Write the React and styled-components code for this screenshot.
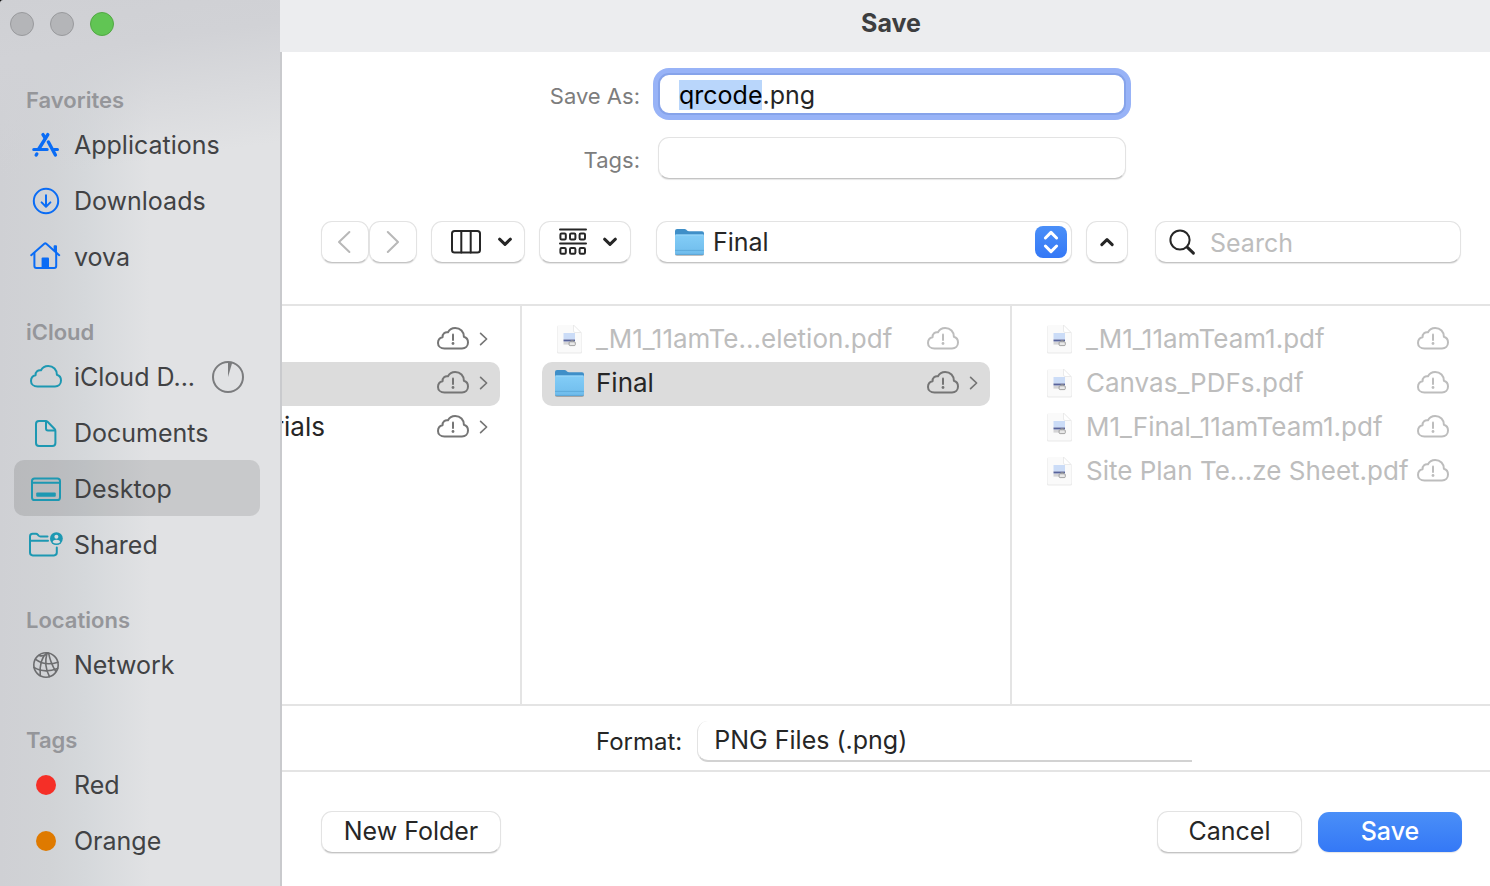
import React, { useEffect, useRef } from 'react';
import styled, { createGlobalStyle, css } from 'styled-components';

const GlobalStyle = createGlobalStyle`
  *, *::before, *::after { box-sizing: border-box; }
  body {
    margin: 0;
    background: #000;
    color: #262626;
    font-family: Inter, "Liberation Sans", sans-serif;
    font-size: 25px;
    line-height: 32px;
  }
  button, input, select { font: inherit; color: inherit; margin: 0; }
  ul { list-style: none; margin: 0; padding: 0; }
  svg { display: block; flex: none; }
`;

const Window = styled.div`
  display: flex;
  min-height: 100vh;
  overflow: hidden;
`;

/* ---------- sidebar ---------- */

const Sidebar = styled.nav`
  flex: none;
  width: 280px;
  border-top-left-radius: 3px;
  background:
    linear-gradient(172deg, #cfd0d4 0, #d1d2d6 60px, rgba(212, 215, 218, 0) 180px),
    linear-gradient(90deg, #cfd0d4 0, #d1d3d6 50px, #d5d8db 85px, #e1e2e4 150px, #e1e2e4 100%);
`;

const TrafficLights = styled.div`
  display: flex;
  gap: 16px;
  height: 52px;
  padding: 12px 10px;
`;

const Light = styled.button`
  width: 24px;
  height: 24px;
  padding: 0;
  border: 1px solid ${(p) => (p.$on ? '#52a844' : '#999a9d')};
  border-radius: 50%;
  background: ${(p) => (p.$on ? '#61c554' : '#b4b5b8')};
`;

const GroupTitle = styled.h2`
  margin: 0;
  padding: 32px 26px 0;
  font-size: 22px;
  font-weight: 600;
  color: #95969a;
`;

const Place = styled.a`
  display: flex;
  align-items: center;
  gap: 12px;
  height: 56px;
  margin: 0 20px 0 14px;
  padding: 2px 16px 0;
  border-radius: 10px;
  color: #414244;
  text-decoration: none;
  background: ${(p) => (p.$active ? 'rgba(0, 0, 0, 0.11)' : 'transparent')};
  & > svg:first-child { color: ${(p) => p.$tint}; }
  & > svg:last-child { color: #7b7c7e; }
`;

const PlaceName = styled.span`
  flex: 1;
  white-space: nowrap;
`;

const TagDot = styled.span`
  width: 20px;
  height: 20px;
  margin: 0 6px;
  border-radius: 50%;
  background: ${(p) => p.$color};
`;

/* ---------- dialog ---------- */

const Main = styled.main`
  flex: 1;
  min-width: 0;
  display: flex;
  flex-direction: column;
`;

const TitleBar = styled.header`
  height: 52px;
  padding: 7px 0 0 12px;
  background: #ecedef;
  text-align: center;
`;

const Title = styled.h1`
  margin: 0;
  font-size: 25px;
  line-height: 32px;
  font-weight: 700;
  color: #3d3e40;
`;

const Body = styled.form`
  flex: 1;
  display: flex;
  flex-direction: column;
  border-left: 2px solid #c9cacd;
  background: #fff;
`;

const Fields = styled.div`
  display: grid;
  grid-template-columns: 1fr 468px 1fr;
  gap: 22px 18px;
  padding: 21px 0 0 12px;
`;

const FieldLabel = styled.label`
  grid-column: 1;
  justify-self: end;
  align-self: center;
  padding-top: 4px;
  font-size: 22px;
  color: #7d7d7d;
`;

const raised = css`
  border: 1px solid #e3e3e3;
  border-bottom-color: #c4c4c4;
  border-radius: 11px;
  background: #fff;
  box-shadow: 0 1px 1px rgba(0, 0, 0, 0.1);
`;

const TextField = styled.input`
  ${raised}
  width: 100%;
  height: 42px;
  padding: 2px 20px 0;
  outline: none;
  &:focus {
    padding: 2px 19px 0;
    border: 2px solid #86a3ea;
    box-shadow: 0 0 0 5px #98b3f7;
  }
  &::selection { background: #b9d6fb; color: #000; }
`;

const Toolbar = styled.div`
  display: flex;
  gap: 14px;
  padding: 42px 29px 41px 39px;
`;

const ButtonPair = styled.div`
  display: flex;
`;

const ToolButton = styled.button`
  ${raised}
  display: flex;
  align-items: center;
  justify-content: center;
  gap: ${(p) => (p.$menu ? 15 : 0)}px;
  width: ${(p) => p.$width}px;
  height: 42px;
  padding: 0 ${(p) => (p.disabled ? 2 : 0)}px 0 ${(p) => (p.$menu ? 6 : 0)}px;
  color: ${(p) => (p.disabled ? '#b8b8b8' : '#262626')};
`;

const FolderPicker = styled.div`
  ${raised}
  flex: 1;
  display: flex;
  align-items: center;
  gap: 8px;
  height: 42px;
  margin-left: 11px;
  padding: 0 4px 0 17px;
`;

const PlainSelect = styled.select`
  flex: 1;
  min-width: 0;
  height: 32px;
  padding: 0 0 2px;
  border: 0;
  outline: none;
  background: transparent;
  appearance: none;
`;

const Stepper = styled.span`
  display: grid;
  place-items: center;
  width: 32px;
  height: 32px;
  border-radius: 8px;
  background: linear-gradient(#4a8ff8, #3478f6);
  color: #fff;
`;

const SearchBox = styled.label`
  ${raised}
  display: flex;
  align-items: center;
  gap: 14px;
  width: 306px;
  height: 42px;
  margin-left: 13px;
  padding: 0 12px;
`;

const SearchInput = styled.input`
  flex: 1;
  min-width: 0;
  padding: 2px 0 0;
  border: 0;
  outline: none;
  background: transparent;
  &::placeholder { color: #bdbdbd; opacity: 1; }
`;

/* ---------- column browser ---------- */

const Browser = styled.div`
  flex: 1;
  display: grid;
  grid-template-columns: 240px 490px 1fr;
  border-top: 2px solid #e4e4e4;
  border-bottom: 2px solid #e4e4e4;
`;

const Column = styled.ul`
  min-width: 0;
  padding: ${(p) => p.$padding};
  overflow: hidden;
  font-size: 26px;
  &:not(:last-child) { border-right: 2px solid #e4e4e4; }
`;

const Entry = styled.li`
  display: flex;
  align-items: center;
  gap: 10px;
  height: 44px;
  padding: 0 12px 2px ${(p) => (p.$flush ? 0 : 12)}px;
  border-radius: ${(p) => (p.$flush ? '0 10px 10px 0' : '10px')};
  background: ${(p) => (p.$selected ? '#dcdcdc' : 'transparent')};
  color: ${(p) => (p.$dim ? '#bdbdbd' : '#262626')};
  & > svg:not(:first-child) { color: ${(p) => (p.$dim ? '#bdbdbd' : '#757575')}; }
`;

const EntryName = styled.span`
  flex: 1;
  min-width: 0;
  padding-left: 1px;
  white-space: nowrap;
`;

const ScrolledName = styled.span`
  display: flex;
  justify-content: flex-end;
  width: 43px;
  margin-right: auto;
  overflow: hidden;
`;

const ChevronSlot = styled.span`
  width: 9px;
`;

/* ---------- bottom ---------- */

const FormatRow = styled.div`
  display: flex;
  align-items: center;
  gap: 15px;
  height: 66px;
  padding: 6px 0 0 314px;
  border-bottom: 2px solid #e4e4e4;
`;

const FormatLabel = styled.label`
  padding-top: 2px;
  font-size: 24px;
`;

const FormatSelect = styled(PlainSelect)`
  flex: 0 1 495px;
  height: 41px;
  padding: 0 16px;
  border-left: 1px solid #e3e3e3;
  border-bottom: 2px solid #d2d2d2;
  border-radius: 11px 0 0 11px;
`;

const Footer = styled.footer`
  display: flex;
  align-items: center;
  gap: 16px;
  padding: 39px 28px 33px 39px;
`;

const PushButton = styled.button`
  ${raised}
  width: ${(p) => p.$width}px;
  height: 42px;
  padding: 0 0 2px;
  &:first-child { margin-right: auto; }
  ${(p) => p.$primary && css`
    height: 40px;
    border: 0;
    color: #fff;
    font-weight: 500;
    background: linear-gradient(#4a8ff8, #3478f6);
  `}
`;

/* ---------- icons ---------- */

const Icon = ({ w = 32, h = 32, sw = 2, children }) => (
  <svg width={w} height={h} viewBox={`0 0 ${w} ${h}`} fill="none" stroke="currentColor"
    strokeWidth={sw} strokeLinecap="round" strokeLinejoin="round" aria-hidden="true">
    {children}
  </svg>
);

const cloudPath =
  'M7.5 21.5C3.6 21.5 1 19 1 15.9C1 12.8 3.1 10.7 5.6 10.2C5.3 7 8 4.7 11 5.3C12.3 2.7 15 1 18.2 1C23.3 1 27 4.9 26.9 9.8C29.4 10.5 31 12.7 31 15.6C31 19 28.5 21.5 25 21.5Z';

const Cloud = () => <Icon h={24}><path d={cloudPath} /></Icon>;

const CloudAlert = () => (
  <Icon h={24} sw={2}>
    <path d={cloudPath} />
    <path d="M16 7.5V13" />
    <circle cx="16" cy="16.5" r="1.4" fill="currentColor" stroke="none" />
  </Icon>
);

const AppsIcon = () => (
  <Icon sw={3}>
    <path d="M17.8 5.6L8.8 20" strokeWidth="3.4" />
    <path d="M13 5.6L15.2 9" strokeWidth="3.4" />
    <path d="M18.4 13L25.4 26" strokeWidth="3.4" />
    <path d="M3.7 20.6H17.2M24 20.6H27.5" />
    <path d="M6.8 25L6.2 26" strokeWidth="3.4" />
  </Icon>
);

const DownloadsIcon = () => (
  <Icon>
    <circle cx="16" cy="16" r="12.2" />
    <path d="M16 10.2V21.4M11.6 17.4L16 21.8L20.4 17.4" />
  </Icon>
);

const HomeIcon = () => (
  <Icon>
    <path d="M1.2 14.2L14.3 2.8Q15.3 2 16.3 2.8L29.2 14.2" />
    <path d="M24.6 9.5V5.3H26V11" />
    <path d="M4.4 12V25Q4.4 27 6.4 27H24.2Q26.2 27 26.2 25V12" />
    <path d="M11.6 27V17.4Q11.6 16.4 12.6 16.4H18Q19 16.4 19 17.4V27Z" fill="currentColor" stroke="none" />
  </Icon>
);

const DocumentIcon = () => (
  <Icon>
    <path d="M9 4H15.4Q16.8 4 17.8 5L24.6 12Q25.4 12.9 25.4 14V26Q25.4 29 22.4 29H9Q6 29 6 26V7Q6 4 9 4Z" />
    <path d="M16 4.4V11.4Q16 13.4 18 13.4H25" />
  </Icon>
);

const DesktopIcon = () => (
  <Icon>
    <rect x="2" y="5.4" width="28" height="21.6" rx="2.6" />
    <path d="M2 9.8H30" />
    <rect x="6.2" y="19.6" width="19.6" height="4.2" rx="1" fill="currentColor" stroke="none" />
  </Icon>
);

const SharedGlyph = styled.svg`
  width: 34px;
  height: 32px;
  margin: 0 -1px;
`;

const SharedIcon = () => (
  <SharedGlyph viewBox="0 0 34 32" fill="none" stroke="currentColor" strokeWidth="2"
    strokeLinecap="round" strokeLinejoin="round" aria-hidden="true">
    <path d="M18.5 7.4H11.4Q10.4 7.4 9.6 6.6L8.7 5.6Q8 4.8 7 4.8H3.6Q1 4.8 1 7.4V23.6Q1 26.4 3.8 26.4H25Q27.8 26.4 27.8 23.6V18.4" />
    <path d="M1 11.8H19" />
    <circle cx="27.4" cy="9.6" r="6.4" fill="currentColor" stroke="none" />
    <circle cx="27.4" cy="7.8" r="2" fill="#d9dbde" stroke="none" />
    <path d="M23.6 13.2Q24.2 10.8 27.4 10.8T31.2 13.2Q29.6 14.6 27.4 14.6T23.6 13.2Z" fill="#d9dbde" stroke="none" />
  </SharedGlyph>
);

const NetworkIcon = () => (
  <Icon sw={1.6}>
    <circle cx="16" cy="16" r="12.2" />
    <path d="M5.6 10.4Q15 17.4 28 13.2" />
    <path d="M4 18.4Q14 24.6 27.6 19.6" />
    <path d="M9 6.4Q14 8 18 4" />
    <path d="M16.5 4Q9 11 10.2 26.6" />
    <path d="M17 4Q13.5 17 19.5 27.6" />
    <path d="M18.6 4.2Q20.5 14 25.8 22.6" />
  </Icon>
);

const ProgressIcon = () => (
  <Icon>
    <circle cx="16" cy="16" r="15" />
    <path d="M16 16V1A15 15 0 0 1 20.2 1.7Z" fill="currentColor" stroke="none" />
  </Icon>
);

const FolderIcon = () => (
  <svg width="31" height="30" viewBox="0 0 31 30" aria-hidden="true">
    <defs>
      <linearGradient id="folderFront" x1="0" y1="0" x2="0" y2="1">
        <stop offset="0" stopColor="#83cdf7" />
        <stop offset="1" stopColor="#6fbcec" />
      </linearGradient>
    </defs>
    <rect x="1" y="9" width="29" height="20" rx="2" fill="#000" opacity="0.25" />
    <path d="M1 4Q1 2 3 2H10.5Q11.6 2 12.4 2.8L13 3.4Q13.8 4.2 15 4.2H28Q30 4.2 30 6.2V12H1Z" fill="#3f8fc8" />
    <path d="M1 9Q1 7.6 2.4 7.6H28.6Q30 7.6 30 9V26Q30 28 28 28H3Q1 28 1 26Z" fill="url(#folderFront)" />
    <path d="M1.5 8H29.5" stroke="#a5dcfb" strokeWidth="0.8" />
    <path d="M1 23.4H30" stroke="#58a5d6" strokeWidth="0.8" />
    <path d="M1.4 27.4H29.6" stroke="#58a0cf" strokeWidth="0.8" />
  </svg>
);

const PdfIcon = () => (
  <svg width="31" height="30" viewBox="0 0 31 30" aria-hidden="true">
    <path d="M4.5 1.5H20L28 9V28Q28 29.5 26.5 29.5H4.5Q3 29.5 3 28V3Q3 1.5 4.5 1.5Z" fill="#e9e9e9" />
    <path d="M4.5 1H19.5L27.5 8.5V27Q27.5 28.5 26 28.5H5Q3.5 28.5 3.5 27V2.5Q3.5 1 4.5 1Z" fill="#fafafa" />
    <path d="M19.5 1V7Q19.5 8.5 21 8.5H27Z" fill="#fff" stroke="#e6e6e6" strokeWidth="0.8" />
    <rect x="9.5" y="9" width="11.5" height="6.5" fill="#cbdcf7" />
    <rect x="9.5" y="15.5" width="11.5" height="2" fill="#58649c" />
    <rect x="9.5" y="18" width="9" height="2.6" fill="#d4d4d6" />
    <rect x="15.1" y="17.8" width="6.2" height="3.8" rx="1" fill="#e8e8e8" stroke="#8f8f8f" strokeWidth="0.8" />
    <path d="M16.9 17.6V16.6H19.5V17.6" fill="none" stroke="#8f8f8f" strokeWidth="0.8" />
  </svg>
);

const EntryChevron = () => <Icon w={9} h={14} sw={1.7}><path d="M1.6 1.4L7.6 7L1.6 12.6" /></Icon>;
const BackIcon = () => <Icon w={14} h={24}><path d="M12.4 2L2 12L12.4 22" /></Icon>;
const ForwardIcon = () => <Icon w={14} h={24}><path d="M2.8 2L13 12L2.8 22" /></Icon>;
const DownIcon = () => <Icon w={16} h={10} sw={3}><path d="M2.6 2.2L8 7.4L13.4 2.2" /></Icon>;
const UpIcon = () => <Icon w={16} h={10} sw={3}><path d="M2.8 7.6L8 2.6L13.2 7.6" /></Icon>;

const StepperIcon = () => (
  <Icon w={16} h={24} sw={3}><path d="M2.4 8L8 2.4L13.6 8M2.4 16L8 21.6L13.6 16" /></Icon>
);

const ColumnsIcon = () => (
  <Icon w={32} h={24}>
    <rect x="2" y="1" width="28" height="21.6" rx="2.6" />
    <path d="M11.3 1V22.6M20.7 1V22.6" />
  </Icon>
);

const GroupIcon = () => (
  <Icon w={28} h={28}>
    <path d="M1 1.4H27M1 15.4H27" />
    {[5.6, 20].map((y) => [1.4, 11, 20.6].map((x) => (
      <rect key={`${x}-${y}`} x={x} y={y} width="5.4" height="5.8" rx="1.2" />
    )))}
  </Icon>
);

const SearchIcon = () => (
  <Icon w={28} h={28} sw={2}>
    <circle cx="12" cy="12" r="9.6" />
    <path d="M19.4 19.4L25.4 25.2" strokeWidth="3" />
  </Icon>
);

/* ---------- data ---------- */

const groups = [
  { title: 'Favorites', tint: '#0a6cf5', items: [['Applications', AppsIcon], ['Downloads', DownloadsIcon], ['vova', HomeIcon]] },
  { title: 'iCloud', tint: '#1d98b2', items: [['iCloud D...', Cloud], ['Documents', DocumentIcon], ['Desktop', DesktopIcon], ['Shared', SharedIcon]] },
  { title: 'Locations', tint: '#6c6d6f', items: [['Network', NetworkIcon]] },
];

const tags = [['Red', '#f52f27'], ['Orange', '#df7a00']];

const teamFiles = ['_M1_11amTeam1.pdf', 'Canvas_PDFs.pdf', 'M1_Final_11amTeam1.pdf', 'Site Plan Te...ze Sheet.pdf'];

const PdfEntry = ({ name }) => (
  <Entry $dim>
    <PdfIcon />
    <EntryName>{name}</EntryName>
    <CloudAlert />
    <ChevronSlot />
  </Entry>
);

export default function App() {
  const nameRef = useRef(null);

  useEffect(() => {
    nameRef.current.focus();
    nameRef.current.setSelectionRange(0, 6);
  }, []);

  return (
    <>
      <GlobalStyle />
      <Window>
        <Sidebar aria-label="Places">
          <TrafficLights>
            <Light type="button" aria-label="Close" />
            <Light type="button" aria-label="Minimize" />
            <Light type="button" aria-label="Zoom" $on />
          </TrafficLights>
          {groups.map(({ title, tint, items }) => (
            <section key={title}>
              <GroupTitle>{title}</GroupTitle>
              {items.map(([name, Glyph]) => (
                <Place key={name} href="#" $tint={tint} $active={name === 'Desktop'}>
                  <Glyph />
                  <PlaceName>{name}</PlaceName>
                  {name.startsWith('iCloud') && <ProgressIcon />}
                </Place>
              ))}
            </section>
          ))}
          <section>
            <GroupTitle>Tags</GroupTitle>
            {tags.map(([name, color]) => (
              <Place key={name} href="#">
                <TagDot $color={color} />
                <PlaceName>{name}</PlaceName>
              </Place>
            ))}
          </section>
        </Sidebar>

        <Main>
          <TitleBar><Title>Save</Title></TitleBar>
          <Body onSubmit={(e) => e.preventDefault()}>
            <Fields>
              <FieldLabel htmlFor="name">Save As:</FieldLabel>
              <TextField id="name" ref={nameRef} defaultValue="qrcode.png" spellCheck={false} />
              <FieldLabel htmlFor="tags">Tags:</FieldLabel>
              <TextField id="tags" />
            </Fields>

            <Toolbar>
              <ButtonPair>
                <ToolButton type="button" $width={48} disabled aria-label="Back"><BackIcon /></ToolButton>
                <ToolButton type="button" $width={48} disabled aria-label="Forward"><ForwardIcon /></ToolButton>
              </ButtonPair>
              <ToolButton type="button" $width={94} $menu aria-label="View as columns"><ColumnsIcon /><DownIcon /></ToolButton>
              <ToolButton type="button" $width={92} $menu aria-label="Group items"><GroupIcon /><DownIcon /></ToolButton>
              <FolderPicker>
                <FolderIcon />
                <PlainSelect aria-label="Folder"><option>Final</option></PlainSelect>
                <Stepper><StepperIcon /></Stepper>
              </FolderPicker>
              <ToolButton type="button" $width={42} aria-label="Collapse"><UpIcon /></ToolButton>
              <SearchBox>
                <SearchIcon />
                <SearchInput type="text" placeholder="Search" aria-label="Search" />
              </SearchBox>
            </Toolbar>

            <Browser>
              <Column $padding="12px 20px 0 0">
                <Entry $flush><ScrolledName /><CloudAlert /><EntryChevron /></Entry>
                <Entry $flush $selected><ScrolledName /><CloudAlert /><EntryChevron /></Entry>
                <Entry $flush><ScrolledName>rials</ScrolledName><CloudAlert /><EntryChevron /></Entry>
              </Column>
              <Column $padding="12px 20px 0">
                <PdfEntry name="_M1_11amTe...eletion.pdf" />
                <Entry $selected>
                  <FolderIcon />
                  <EntryName>Final</EntryName>
                  <CloudAlert />
                  <EntryChevron />
                </Entry>
              </Column>
              <Column $padding="12px 10px 0 20px">
                {teamFiles.map((name) => <PdfEntry key={name} name={name} />)}
              </Column>
            </Browser>

            <FormatRow>
              <FormatLabel htmlFor="format">Format:</FormatLabel>
              <FormatSelect id="format"><option>PNG Files (.png)</option></FormatSelect>
            </FormatRow>

            <Footer>
              <PushButton type="button" $width={180}>New Folder</PushButton>
              <PushButton type="button" $width={145}>Cancel</PushButton>
              <PushButton type="submit" $width={144} $primary>Save</PushButton>
            </Footer>
          </Body>
        </Main>
      </Window>
    </>
  );
}
